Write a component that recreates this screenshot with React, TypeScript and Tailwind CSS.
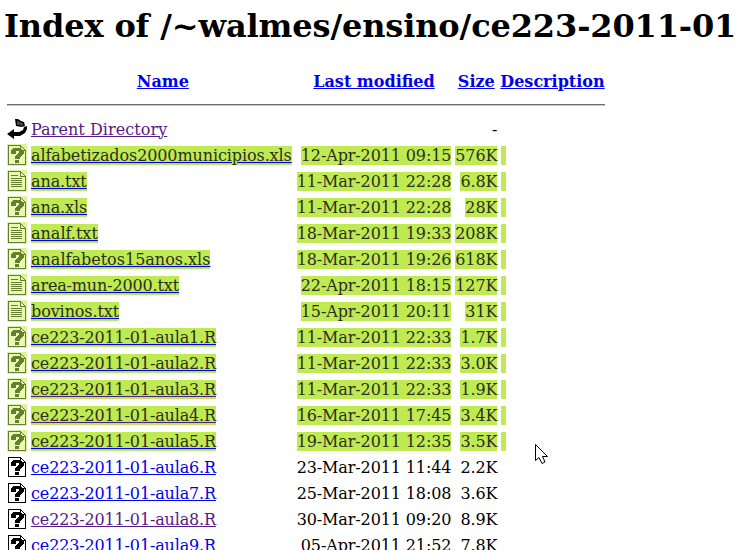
import React from "react";

type Entry = {
  name: string;
  date: string;
  size: string;
  kind: "unknown" | "text";
  visited?: boolean;
  track?: string;
};

const tight = "tracking-[-0.15px]";
const mid = "tracking-[-0.1px]";

const entries: Entry[] = [
  { name: "alfabetizados2000municipios.xls", date: "12-Apr-2011 09:15", size: "576K", kind: "unknown", track: mid },
  { name: "ana.txt", date: "11-Mar-2011 22:28", size: "6.8K", kind: "text", track: mid },
  { name: "ana.xls", date: "11-Mar-2011 22:28", size: "28K", kind: "unknown", track: mid },
  { name: "analf.txt", date: "18-Mar-2011 19:33", size: "208K", kind: "text" },
  { name: "analfabetos15anos.xls", date: "18-Mar-2011 19:26", size: "618K", kind: "unknown" },
  { name: "area-mun-2000.txt", date: "22-Apr-2011 18:15", size: "127K", kind: "text", track: tight },
  { name: "bovinos.txt", date: "15-Apr-2011 20:11", size: "31K", kind: "text", track: mid },
  { name: "ce223-2011-01-aula1.R", date: "11-Mar-2011 22:33", size: "1.7K", kind: "unknown", track: tight },
  { name: "ce223-2011-01-aula2.R", date: "11-Mar-2011 22:33", size: "3.0K", kind: "unknown", track: tight },
  { name: "ce223-2011-01-aula3.R", date: "11-Mar-2011 22:33", size: "1.9K", kind: "unknown", visited: true, track: tight },
  { name: "ce223-2011-01-aula4.R", date: "16-Mar-2011 17:45", size: "3.4K", kind: "unknown", visited: true, track: tight },
  { name: "ce223-2011-01-aula5.R", date: "19-Mar-2011 12:35", size: "3.5K", kind: "unknown", track: tight },
];

const plainEntries: Entry[] = [
  { name: "ce223-2011-01-aula6.R", date: "23-Mar-2011 11:44", size: "2.2K", kind: "unknown", track: tight },
  { name: "ce223-2011-01-aula7.R", date: "25-Mar-2011 18:08", size: "3.6K", kind: "unknown", track: tight },
  { name: "ce223-2011-01-aula8.R", date: "30-Mar-2011 09:20", size: "8.9K", kind: "unknown", visited: true, track: tight },
  { name: "ce223-2011-01-aula9.R", date: "05-Apr-2011 21:52", size: "7.8K", kind: "unknown", track: tight },
];

// Apache's 20x22 file icons, pixel style
const FileIcon = ({ kind, selected }: { kind: "unknown" | "text"; selected: boolean }) => {
  const bg = selected ? "#dcf39a" : "#ffffff";
  const fg = selected ? "#667f2c" : "#000000";
  const page = selected ? "#e9f8b4" : "#ffffff";
  return (
    <svg width="20" height="22" viewBox="0 0 20 22" shapeRendering="crispEdges" className="block">
      <rect width="20" height="22" fill={bg} />
      <path d="M1 1H14V2H15V3H16V4H17V5H18V6H19V21H1Z" fill={fg} />
      <path d="M2 2H13V7H18V20H2Z" fill={page} />
      <path d="M14 3H15V4H16V5H17V6H14Z" fill={page} />
      {kind === "unknown" ? (
        <path
          d="M6 4H14V5H15V6H16V7H17V10H16V11H15V12H14V13H13V15H8V12H9V11H10V10H11V9H12V7H9V10H4V6H5V5H6ZM8 16H12V19H8Z"
          fill={fg}
        />
      ) : (
        <path
          d="M4 5H11V6H4ZM4 8H15V9H4ZM4 10H15V11H4ZM4 12H15V13H4ZM4 14H15V15H4ZM4 16H15V17H4Z"
          fill={fg}
        />
      )}
    </svg>
  );
};

const BackIcon = () => (
  <svg width="20" height="22" viewBox="0 0 20 22" className="block">
    <path d="M0 16L7 11V14H12L16 12L17 9L20 8V11L18 15L13 18H7V21Z" fill="#000" />
    <path d="M8 1H11L14 3L17 4L18 8L15 9L9 8Z" fill="#000" />
    <path d="M11 3V7M13 4V7M15 5V8" stroke="#8a8a8a" strokeWidth="1" />
  </svg>
);

const Hl = ({ children }: { children: React.ReactNode }) => (
  <span className="bg-[#bfea52] text-[#2b2f22]">{children}</span>
);

const HeaderLink = ({ children }: { children: React.ReactNode }) => (
  <a href="#" className="text-[#0000ee] underline">
    {children}
  </a>
);

export default function App() {
  return (
    <div className="h-[550px] w-[744px] overflow-hidden bg-white text-[16px] leading-[19px] text-black font-['DejaVu_Serif',serif]">
      <h1 className="pt-[8px] pl-[4px] text-[32px] leading-[37px] font-bold tracking-[-0.13px] whitespace-nowrap">
        Index of /~walmes/ensino/ce223-2011-01
      </h1>
      <table className="mt-[24px] ml-[4px] border-separate border-spacing-[2px]">
        <tbody>
          <tr>
            <th className="p-[1px]"></th>
            <th className="p-[1px] pl-[3px] pr-[1px]"><HeaderLink>Name</HeaderLink></th>
            <th className="p-[1px]"><HeaderLink>Last modified</HeaderLink></th>
            <th className="p-[1px]"><HeaderLink>Size</HeaderLink></th>
            <th className="p-[1px]"><span className="inline-block -ml-[1px]"><HeaderLink>Description</HeaderLink></span></th>
          </tr>
          <tr>
            <th colSpan={5} className="p-[1px]">
              <hr className="mt-[9px] mb-[8px] h-[2px] border-t border-b border-t-[#6e6e6e] border-b-[#c4c4c4]" />
            </th>
          </tr>
          <tr>
            <td className="p-[1px] align-top"><BackIcon /></td>
            <td className="p-[1px] pr-[2px]">
              <a href="#" className="text-[#551a8b] underline tracking-[0.06px]">Parent Directory</a>
            </td>
            <td className="p-[1px] text-right"></td>
            <td className="p-[1px] text-right">-</td>
            <td className="p-[1px]"></td>
          </tr>
          {entries.map((f) => (
            <tr key={f.name}>
              <td className="p-[1px] align-top"><FileIcon kind={f.kind} selected /></td>
              <td className={`p-[1px] pr-[2px] whitespace-nowrap ${f.track ?? ""}`}>
                <Hl>
                  <a
                    href="#"
                    className={f.visited ? "underline decoration-[#551a8b]" : "underline decoration-[#0000ee]"}
                  >
                    {f.name}
                  </a>
                </Hl>
              </td>
              <td className="p-[1px] text-right whitespace-nowrap tracking-[-0.12px]"><Hl>{f.date}</Hl></td>
              <td className="p-[1px] text-right whitespace-nowrap tracking-[-0.12px]"><Hl>{f.size}</Hl></td>
              <td className="p-[1px]"><Hl>{"\u00a0"}</Hl></td>
            </tr>
          ))}
          {plainEntries.map((f) => (
            <tr key={f.name}>
              <td className="p-[1px] align-top"><FileIcon kind={f.kind} selected={false} /></td>
              <td className={`p-[1px] pr-[2px] whitespace-nowrap ${f.track ?? ""}`}>
                <a href="#" className={f.visited ? "text-[#551a8b] underline" : "text-[#0000ee] underline"}>
                  {f.name}
                </a>
              </td>
              <td className="p-[1px] text-right whitespace-nowrap tracking-[-0.12px]">{f.date}</td>
              <td className="p-[1px] text-right whitespace-nowrap tracking-[-0.12px]">{f.size}</td>
              <td className="p-[1px]"></td>
            </tr>
          ))}
        </tbody>
      </table>
      {/* mouse pointer left in the shot */}
      <svg width="14" height="21" viewBox="0 0 14 21" className="absolute left-[535px] top-[444px]">
        <path d="M.5.5V16.5L4 13.5L7 19.5L10 18L7.5 12.5H12.5Z" fill="#fff" stroke="#000" />
      </svg>
    </div>
  );
}
